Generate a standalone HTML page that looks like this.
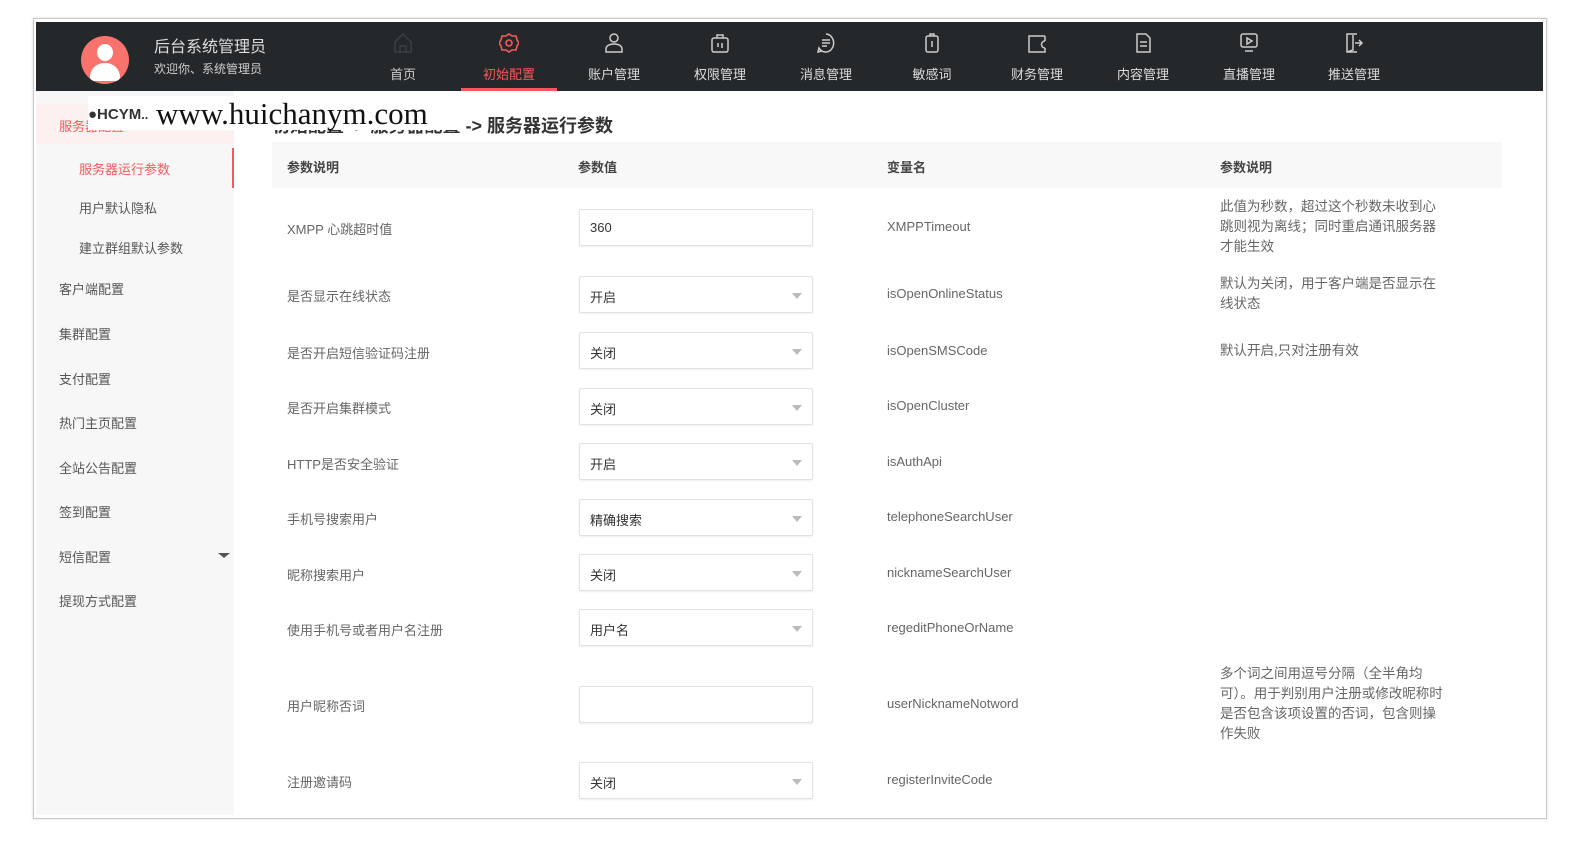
<!DOCTYPE html>
<html><head><meta charset="utf-8"><style>
*{margin:0;padding:0;box-sizing:border-box}
body{width:1586px;height:856px;background:#fff;position:relative;overflow:hidden;font-family:"Liberation Sans","Noto Sans CJK SC",sans-serif;color:#555}
.frame{position:absolute;left:33px;top:18px;width:1514px;height:801px;border:1px solid #c8c8c8;box-shadow:0 0 3px #ddd}
.hdr{position:absolute;left:36px;top:22px;width:1507px;height:69px;background:#25282b}
.av{position:absolute;left:81px;top:36px;width:48px;height:48px;border-radius:50%;background:#f9736c;overflow:hidden}
.av:before{content:"";position:absolute;left:16px;top:8px;width:16px;height:17px;border-radius:50%;background:#fff}
.av:after{content:"";position:absolute;left:9px;top:27px;width:30px;height:18px;border-radius:15px 15px 4px 4px;background:#fff}
.t1{position:absolute;left:154px;top:33px;color:#ddd;font-size:16px}
.t2{position:absolute;left:154px;top:60px;color:#ccc;font-size:12px}
.nav{position:absolute;top:22px;width:96px;height:69px;text-align:center;color:#ddd;font-size:13px}
.nav svg{position:absolute;left:38px;top:10px}
.nav span{position:absolute;left:0;right:0;top:42px}
.nav.act{color:#f6595b}
.nav.act:after{content:"";position:absolute;left:0;right:0;bottom:0;height:3px;background:#f6595b}
.side{position:absolute;left:36px;top:91px;width:198px;height:724px;background:#f7f7f7}
.si{position:absolute;left:59px;font-size:13px;color:#555}
.sub{position:absolute;left:79px;font-size:13px;color:#555}
.th{position:absolute;left:272px;top:142px;width:1230px;height:46px;background:#f8f8f8;font-size:13px;font-weight:bold;color:#444}
.th span{position:absolute;top:15px}
.lb{position:absolute;left:287px;font-size:13px;color:#666}
.vn{position:absolute;left:887px;font-size:13px;color:#666}
.ds{position:absolute;left:1220px;font-size:13.5px;color:#666;line-height:20px;width:226px}
.in{position:absolute;left:579px;width:234px;height:37px;border:1px solid #e2e2e2;border-radius:2px;background:#fff;font-size:13px;color:#333;padding:10px 0 0 10px;box-shadow:0 1px 2px #eee}
.in.s:after{content:"";position:absolute;right:10px;top:16px;border:5px solid transparent;border-top:6px solid #bbb;border-bottom:0}
.wm{position:absolute;left:88px;top:96px;width:374px;height:34px;background:#fff;font-family:"Liberation Serif",serif;font-size:31px;color:#111;white-space:nowrap}
</style></head><body>
<div class="frame"></div>
<div class="hdr"></div>
<div class="av"></div>
<div class="t1">后台系统管理员</div>
<div class="t2">欢迎你、系统管理员</div>

<div class="nav" style="left:355px;color:#ccc"><svg width="20" height="22" viewBox="0 0 20 22" fill="none" stroke="#3c3f42" stroke-width="1.5"><path d="M2 10L10 2l8 8v10H2z"/><path d="M7 20v-6h6v6"/></svg><span>首页</span></div>
<div class="nav act" style="left:461px"><svg width="20" height="22" viewBox="0 0 20 22" fill="none" stroke="#f6595b" stroke-width="1.6"><path d="M10 2l3 2h4l1 4 2 3-2 3-1 4h-4l-3 2-3-2H3l-1-4-2-3 2-3 1-4h4z"/><circle cx="10" cy="11" r="3"/></svg><span>初始配置</span></div>
<div class="nav" style="left:566px"><svg width="20" height="22" viewBox="0 0 20 22" fill="none" stroke="#ccc" stroke-width="1.5"><circle cx="10" cy="6" r="4"/><path d="M2 20v-3c0-3 3-5 8-5s8 2 8 5v3z"/></svg><span>账户管理</span></div>
<div class="nav" style="left:672px"><svg width="20" height="22" viewBox="0 0 20 22" fill="none" stroke="#ccc" stroke-width="1.5"><path d="M7 6V3h6v3"/><rect x="2" y="6" width="16" height="14" rx="2"/><path d="M8 11v4M12 11v5"/></svg><span>权限管理</span></div>
<div class="nav" style="left:778px"><svg width="20" height="22" viewBox="0 0 20 22" fill="none" stroke="#ccc" stroke-width="1.5"><path d="M10 2a8 9 0 1 1-7 14l-1 4 4-1"/><path d="M6 8h8M6 11h8M6 14h5"/></svg><span>消息管理</span></div>
<div class="nav" style="left:884px"><svg width="20" height="22" viewBox="0 0 20 22" fill="none" stroke="#ccc" stroke-width="1.5"><rect x="4" y="4" width="12" height="16" rx="2"/><path d="M8 4V2h4v2M10 9v6"/></svg><span>敏感词</span></div>
<div class="nav" style="left:989px"><svg width="20" height="22" viewBox="0 0 20 22" fill="none" stroke="#ccc" stroke-width="1.5"><path d="M18 4H2v16h16v-4M18 4v5"/><path d="M18 9a3 3 0 0 0 0 7"/></svg><span>财务管理</span></div>
<div class="nav" style="left:1095px"><svg width="20" height="22" viewBox="0 0 20 22" fill="none" stroke="#ccc" stroke-width="1.5"><path d="M4 2h9l4 4v14H4z"/><path d="M7 10h7M7 14h7"/></svg><span>内容管理</span></div>
<div class="nav" style="left:1201px"><svg width="20" height="22" viewBox="0 0 20 22" fill="none" stroke="#ccc" stroke-width="1.5"><rect x="2" y="2" width="16" height="13" rx="2"/><path d="M8 6v6l5-3z M6 19h8"/></svg><span>直播管理</span></div>
<div class="nav" style="left:1306px"><svg width="20" height="22" viewBox="0 0 20 22" fill="none" stroke="#ccc" stroke-width="1.5"><path d="M13 2H3v18h10M3 20l6-2V3"/><path d="M11 11h7m-3-3l3 3-3 3"/></svg><span>推送管理</span></div>

<div class="side"></div>
<div style="position:absolute;left:36px;top:104px;width:198px;height:40px;background:#fdf0f0"></div>
<div class="si" style="top:116px;color:#f6595b">服务器配置</div>
<div style="position:absolute;left:217px;top:124px;border:5px solid transparent;border-bottom:5px solid #555;border-top:0"></div>
<div style="position:absolute;left:36px;top:148px;width:198px;height:40px;background:#f7f7f7;border-right:2px solid #f6595b"></div>
<div class="sub" style="top:159px;color:#f6595b">服务器运行参数</div>
<div class="sub" style="top:198px">用户默认隐私</div>
<div class="sub" style="top:238px">建立群组默认参数</div>
<div class="si" style="top:279px">客户端配置</div>
<div class="si" style="top:324px">集群配置</div>
<div class="si" style="top:369px">支付配置</div>
<div class="si" style="top:413px">热门主页配置</div>
<div class="si" style="top:458px">全站公告配置</div>
<div class="si" style="top:502px">签到配置</div>
<div class="si" style="top:547px">短信配置</div>
<div style="position:absolute;left:218px;top:553px;border:6px solid transparent;border-top:5px solid #555;border-bottom:0"></div>
<div class="si" style="top:591px">提现方式配置</div>

<div style="position:absolute;left:272px;top:112px;font-size:18px;font-weight:bold;color:#333">初始配置 -&gt; 服务器配置 -&gt; 服务器运行参数</div>
<div class="wm"><span style="font-family:'Liberation Sans',sans-serif;font-size:15px;font-weight:bold;color:#333;vertical-align:5px">&#9679;HCYM<small>..</small></span> www.huichanym.com</div>

<div class="th"><span style="left:15px">参数说明</span><span style="left:306px">参数值</span><span style="left:615px">变量名</span><span style="left:948px">参数说明</span></div>

<div class="lb" style="top:219px">XMPP 心跳超时值</div><div class="in" style="top:209px">360</div><div class="vn" style="top:219px">XMPPTimeout</div>
<div class="ds" style="top:197px">此值为秒数，超过这个秒数未收到心跳则视为离线；同时重启通讯服务器才能生效</div>
<div class="lb" style="top:286px">是否显示在线状态</div><div class="in s" style="top:276px">开启</div><div class="vn" style="top:286px">isOpenOnlineStatus</div>
<div class="ds" style="top:274px">默认为关闭，用于客户端是否显示在线状态</div>
<div class="lb" style="top:343px">是否开启短信验证码注册</div><div class="in s" style="top:332px">关闭</div><div class="vn" style="top:343px">isOpenSMSCode</div>
<div class="ds" style="top:341px">默认开启,只对注册有效</div>
<div class="lb" style="top:398px">是否开启集群模式</div><div class="in s" style="top:388px">关闭</div><div class="vn" style="top:398px">isOpenCluster</div>
<div class="lb" style="top:454px">HTTP是否安全验证</div><div class="in s" style="top:443px">开启</div><div class="vn" style="top:454px">isAuthApi</div>
<div class="lb" style="top:509px">手机号搜索用户</div><div class="in s" style="top:499px">精确搜索</div><div class="vn" style="top:509px">telephoneSearchUser</div>
<div class="lb" style="top:565px">昵称搜索用户</div><div class="in s" style="top:554px">关闭</div><div class="vn" style="top:565px">nicknameSearchUser</div>
<div class="lb" style="top:620px">使用手机号或者用户名注册</div><div class="in s" style="top:609px">用户名</div><div class="vn" style="top:620px">regeditPhoneOrName</div>
<div class="lb" style="top:696px">用户昵称否词</div><div class="in" style="top:686px"></div><div class="vn" style="top:696px">userNicknameNotword</div>
<div class="ds" style="top:664px">多个词之间用逗号分隔（全半角均可）。用于判别用户注册或修改昵称时是否包含该项设置的否词，包含则操作失败</div>
<div class="lb" style="top:772px">注册邀请码</div><div class="in s" style="top:762px">关闭</div><div class="vn" style="top:772px">registerInviteCode</div>
</body></html>
